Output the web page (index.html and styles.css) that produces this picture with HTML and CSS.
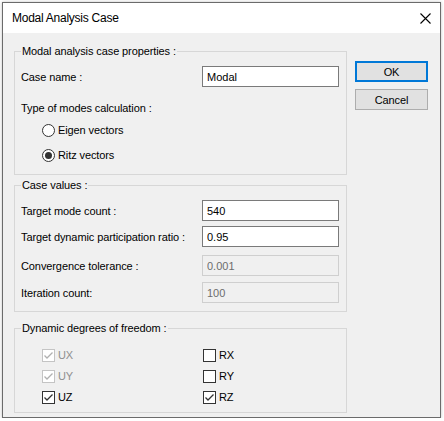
FILE: index.html
```html
<!DOCTYPE html>
<html lang="en">
<head>
    <meta charset="UTF-8">
    <title>Modal Analysis Case</title>
    <link rel="stylesheet" href="styles.css">
</head>
<body>
    <div class="window">
        <div class="titlebar">
            <span class="title">Modal Analysis Case</span>
            <svg class="close" width="11" height="11" viewBox="0 0 11 11">
                <path d="M0.5 0.5 L10.5 10.5 M10.5 0.5 L0.5 10.5" stroke="#000" stroke-width="1.1" fill="none"/>
            </svg>
        </div>

        <div class="client">
            <div class="main">
                <fieldset class="group props">
                    <legend>Modal analysis case properties :</legend>
                    <div class="field">
                        <label for="caseName">Case name :</label>
                        <input type="text" id="caseName" value="Modal">
                    </div>
                    <div class="subhead">Type of modes calculation :</div>
                    <label class="option first">
                        <span class="radio"></span>Eigen vectors
                    </label>
                    <label class="option">
                        <span class="radio checked"></span>Ritz vectors
                    </label>
                </fieldset>

                <fieldset class="group values">
                    <legend>Case values :</legend>
                    <div class="field">
                        <label for="modeCount">Target mode count :</label>
                        <input type="text" id="modeCount" value="540">
                    </div>
                    <div class="field">
                        <label for="ratio">Target dynamic participation ratio :</label>
                        <input type="text" id="ratio" value="0.95">
                    </div>
                    <div class="field">
                        <label for="tolerance">Convergence tolerance :</label>
                        <input type="text" id="tolerance" value="0.001" disabled>
                    </div>
                    <div class="field">
                        <label for="iterations">Iteration count:</label>
                        <input type="text" id="iterations" value="100" disabled>
                    </div>
                </fieldset>

                <fieldset class="group dofs">
                    <legend>Dynamic degrees of freedom :</legend>
                    <div class="checks">
                        <label class="check disabled"><span class="box"><svg width="13" height="13" viewBox="0 0 13 13"><path d="M2.5 6.5 L5 9 L10.5 3.5" /></svg></span>UX</label>
                        <label class="check"><span class="box"></span>RX</label>
                        <label class="check disabled"><span class="box"><svg width="13" height="13" viewBox="0 0 13 13"><path d="M2.5 6.5 L5 9 L10.5 3.5" /></svg></span>UY</label>
                        <label class="check"><span class="box"></span>RY</label>
                        <label class="check"><span class="box"><svg width="13" height="13" viewBox="0 0 13 13"><path d="M2.5 6.5 L5 9 L10.5 3.5" /></svg></span>UZ</label>
                        <label class="check"><span class="box"><svg width="13" height="13" viewBox="0 0 13 13"><path d="M2.5 6.5 L5 9 L10.5 3.5" /></svg></span>RZ</label>
                    </div>
                </fieldset>
            </div>

            <div class="buttons">
                <button class="default">OK</button>
                <button>Cancel</button>
            </div>
        </div>
    </div>
</body>
</html>
```

FILE: styles.css
```css
body { margin: 0; background: #fff; font-family: "Liberation Sans", Arial, sans-serif; font-size: 11px; letter-spacing: -0.1px; color: #000; }
.window { margin: 2px 0 0 2px; width: 437px; height: 414px; border: 1px solid #6b6b6b; background: #f0f0f0; display: flex; flex-direction: column; box-shadow: 0 0 3px rgba(0, 0, 0, 0.25); }

.titlebar { height: 30px; background: #fff; display: flex; align-items: center; justify-content: space-between; padding: 0 9px 0 9px; }
.title { font-size: 12px; letter-spacing: -0.25px; }
.close { display: block; }

.client { flex: 1; display: flex; gap: 8px; padding: 11px 0 0 11px; }
.main { width: 333px; display: flex; flex-direction: column; }

.group { margin: 0; padding: 0 7px 9px 6px; border: 1px solid #d7d7d7; min-width: 0; }
.group legend { padding: 0 1px; line-height: 14px; }
.values { margin-top: 3px; padding-bottom: 8px; }
.dofs { margin-top: 9px; padding-bottom: 5px; }

.field { display: flex; align-items: center; justify-content: space-between; height: 21px; margin-top: 5px; }
.props .field, .values .field:first-of-type { margin-top: 8px; }
.values .field:nth-of-type(3) { margin-top: 8px; }
.values .field:nth-of-type(4) { margin-top: 6px; }

input[type="text"] { box-sizing: border-box; width: 137px; height: 21px; margin: 0; padding: 0 4px; border: 1px solid #7a7a7a; background: #fff; font-family: inherit; font-size: 11px; color: #000; outline: none; }
input[type="text"]:disabled { background: #f0f0f0; border-color: #cfcfcf; color: #6d6d6d; }

.subhead { margin-top: 14px; line-height: 14px; }

.option { display: flex; align-items: center; gap: 3px; height: 20px; margin: 5px 0 0 21px; }
.radio { box-sizing: border-box; width: 13px; height: 13px; border: 1px solid #333; border-radius: 50%; background: #fff; display: flex; align-items: center; justify-content: center; }
.radio.checked::after { content: ""; width: 7px; height: 7px; border-radius: 50%; background: #333; }

.checks { display: grid; grid-template-columns: 161px auto; grid-auto-rows: 20px; row-gap: 1px; margin: 10px 0 0 21px; }
.check { display: flex; align-items: center; gap: 3px; }
.box { box-sizing: border-box; width: 13px; height: 13px; border: 1px solid #333; background: #fff; position: relative; }
.box svg { position: absolute; left: -1px; top: -1px; }
.box path { fill: none; stroke: #333; stroke-width: 1.3; }
.check.disabled { color: #8f8f8f; }
.check.disabled .box { border-color: #c4c4c4; }
.check.disabled .box path { stroke: #b0b0b0; }

.buttons { display: flex; flex-direction: column; gap: 7px; padding-top: 17px; }
button { box-sizing: border-box; width: 73px; height: 21px; padding: 0; border: 1px solid #adadad; background: #e1e1e1; font-family: inherit; font-size: 11px; letter-spacing: inherit; color: #000; }
button.default { border: 2px solid #0078d7; }
```
